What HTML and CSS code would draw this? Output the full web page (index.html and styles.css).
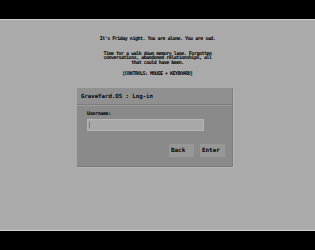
FILE: index.html
```html
<!DOCTYPE html>
<html lang="en">
<head>
    <meta charset="UTF-8">
    <title>GraveYard.OS</title>
    <link rel="stylesheet" href="styles.css">
</head>
<body>
    <div id="stage">
        <div id="intro">
            <p class="line first">It's Friday night. You are alone. You are sad.</p>
            <p class="line story">Time for a walk down memory lane. Forgotten<br>conversations, abandoned relationships, all<br>that could have been.</p>
            <p class="line controls">[CONTROLS: MOUSE + KEYBOARD]</p>
        </div>
        <div id="login">
            <div class="head">GraveYard.OS : Log-in</div>
            <div class="body">
                <label class="label">Username:</label>
                <div class="field"><span class="caret"></span></div>
                <div class="buttons">
                    <span class="btn">Back</span>
                    <span class="btn">Enter</span>
                </div>
            </div>
        </div>
    </div>
</body>
</html>
```

FILE: styles.css
```css
*{
    margin: 0;
    padding: 0;
    box-sizing: border-box;
}
html,body{
    background: #000;
    height: 100%;
}
body{
    font-family: "DejaVu Sans Mono", "Liberation Mono", monospace;
    font-weight: bold;
    color: #000;
    padding-top: 19px;
}
#stage{
    height: 212px;
    background: #aaa;
    border-top: 1px solid #cfcfcf;
    border-bottom: 1px solid #cfcfcf;
    padding-top: 16px;
}
#intro{
    text-align: center;
    font-size: 5px;
    letter-spacing: -0.5px;
}
#intro .line{
    line-height: 4.6px;
}
#intro .story{
    margin-top: 10px;
}
#intro .controls{
    margin-top: 7px;
}
#login{
    width: 156px;
    height: 79px;
    margin: 12px 0 0 77px;
    background: #8a8a8a;
    border-right: 1px solid #7c7c7c;
    border-bottom: 1px solid #7c7c7c;
    box-shadow: 1px 1px 0 #b6b6b6;
}
#login .head{
    height: 17px;
    background: #909090;
    border-bottom: 1px solid #7e7e7e;
    box-shadow: 0 1px 0 #9c9c9c;
    font-size: 5.7px;
    line-height: 17px;
    padding-left: 4px;
}
#login .body{
    padding: 6px 7px 0 10px;
}
#login .label{
    display: block;
    font-size: 5px;
    letter-spacing: -0.35px;
    line-height: 5px;
}
#login .field{
    width: 117px;
    height: 12px;
    margin-top: 3px;
    background: #a8a8a8;
    border: 1px solid #b4b4b4;
    padding: 2px 0 0 1px;
}
#login .caret{
    display: block;
    width: 1px;
    height: 6px;
    background: #7a7a7a;
}
#login .buttons{
    display: flex;
    justify-content: flex-end;
    gap: 6px;
    margin-top: 13px;
}
#login .btn{
    width: 25px;
    height: 13px;
    background: #979797;
    font-size: 5.9px;
    line-height: 13px;
    padding-left: 2px;
}
```
